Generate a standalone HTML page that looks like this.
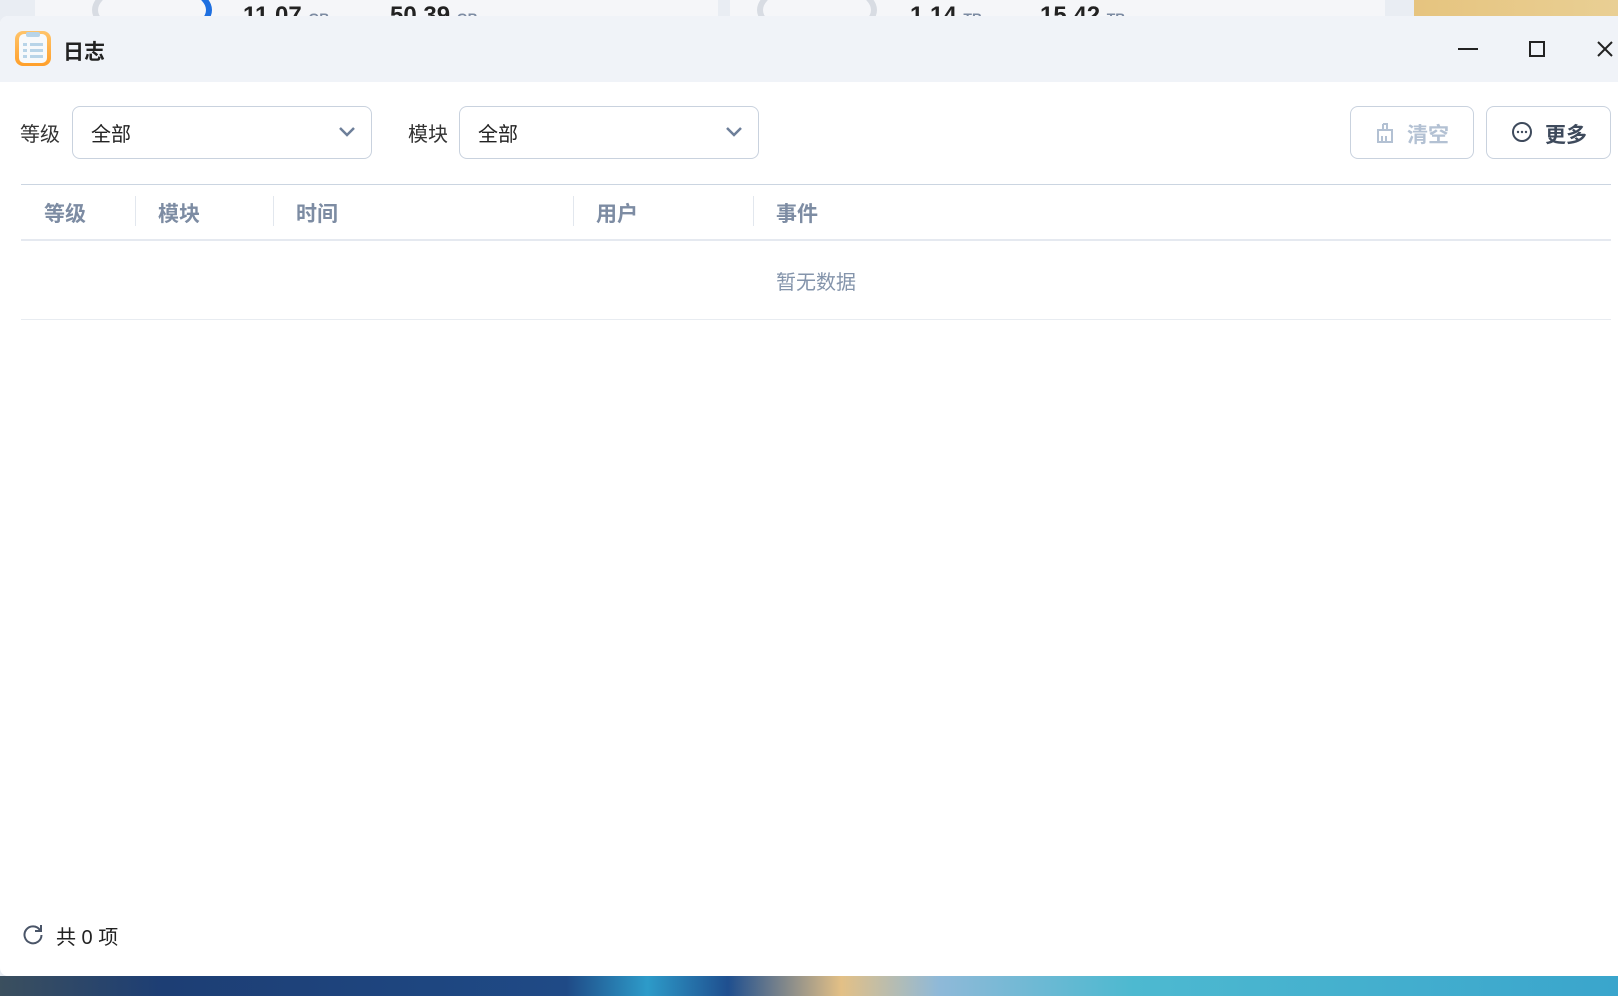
<!DOCTYPE html>
<html><head><meta charset="utf-8"><style>
*{box-sizing:border-box;margin:0;padding:0}
body{width:1618px;height:996px;overflow:hidden;position:relative;background:#e9edf3;font-family:"Liberation Sans","Noto Sans CJK SC",sans-serif}
.abs{position:absolute}
.win{position:absolute;left:0;top:16px;width:1618px;height:960px;background:#fff;border-radius:8px 0 0 8px;overflow:hidden}
.tb{position:absolute;left:0;top:0;width:100%;height:66px;background:#f0f3f8}
.sel{position:absolute;top:90px;height:53px;width:300px;border:1px solid #c9d2de;border-radius:8px;font-size:20px;color:#222;padding:17px 18px;line-height:22px}
.sel svg{position:absolute;right:14px;top:18px}
.lbl{position:absolute;top:102px;font-size:20px;color:#333}
.btn{position:absolute;top:90px;height:53px;border:1px solid #c9d2de;border-radius:8px;font-size:21px;font-weight:bold;line-height:51px}
.th{position:absolute;top:182px;font-size:21px;font-weight:bold;color:#7d8ca3}
.sep{position:absolute;top:180px;width:1px;height:30px;background:#e2e7ee}
</style></head><body>
<div class="abs" style="left:35px;top:0;width:683px;height:16px;background:#f5f6f9"></div>
<div class="abs" style="left:730px;top:0;width:655px;height:16px;background:#f5f6f9"></div>
<div class="abs" style="left:1414px;top:0;width:204px;height:16px;background:linear-gradient(90deg,#e6c47f,#e9cf94)"></div>
<div class="abs" style="left:92px;top:-20px;width:120px;height:60px;border:6px solid #d8dce3;border-right-color:#1e6fe0;border-radius:50%"></div>
<div class="abs" style="left:757px;top:-20px;width:120px;height:60px;border:6px solid #d8dce3;border-radius:50%"></div>
<div class="abs" style="left:243px;top:2px;font-size:24px;font-weight:bold;color:#222">11.07 <span style="font-size:14px;color:#7d8ca3">GB</span></div>
<div class="abs" style="left:390px;top:2px;font-size:24px;font-weight:bold;color:#222">50.39 <span style="font-size:14px;color:#7d8ca3">GB</span></div>
<div class="abs" style="left:910px;top:2px;font-size:24px;font-weight:bold;color:#222">1.14 <span style="font-size:14px;color:#7d8ca3">TB</span></div>
<div class="abs" style="left:1040px;top:2px;font-size:24px;font-weight:bold;color:#222">15.42 <span style="font-size:14px;color:#7d8ca3">TB</span></div>
<div class="abs" style="left:0;top:976px;width:1618px;height:20px;background:linear-gradient(90deg,#3b4f5e 0%,#1d3e74 10%,#1f4a86 35%,#2d9bc9 40%,#1f4f8f 45%,#e3c086 52%,#8fb9d8 58%,#4db9d0 70%,#3aa5cc 100%)"></div>
<div class="win">
 <div class="tb">
  <div class="abs" style="left:15px;top:15px;width:36px;height:35px;border-radius:8px;background:linear-gradient(#ffc46a,#ff9f2a)"></div>
  <div class="abs" style="left:19px;top:18px;width:28px;height:29px;border-radius:5px;background:#f7f9fb"></div>
  <div class="abs" style="left:26px;top:16px;width:14px;height:5px;border-radius:2px;background:#b8d4e8"></div>
  <div class="abs" style="left:23px;top:27px;width:20px;height:3px;background:linear-gradient(90deg,#b8d4e8 4px,transparent 4px,transparent 7px,#b8d4e8 7px)"></div>
  <div class="abs" style="left:23px;top:33px;width:20px;height:3px;background:linear-gradient(90deg,#b8d4e8 4px,transparent 4px,transparent 7px,#b8d4e8 7px)"></div>
  <div class="abs" style="left:23px;top:39px;width:20px;height:3px;background:linear-gradient(90deg,#b8d4e8 4px,transparent 4px,transparent 7px,#b8d4e8 7px)"></div>
  <div class="abs" style="left:63px;top:20px;font-size:21px;font-weight:bold;color:#222">日志</div>
  <div class="abs" style="left:1458px;top:32px;width:20px;height:2px;background:#222"></div>
  <div class="abs" style="left:1529px;top:25px;width:16px;height:16px;border:2px solid #222"></div>
  <svg class="abs" style="left:1596px;top:24px" width="18" height="18"><path d="M2 2L16 16M16 2L2 16" stroke="#222" stroke-width="2"/></svg>
 </div>
 <div class="lbl" style="left:20px">等级</div>
 <div class="sel" style="left:72px">全部<svg width="20" height="14"><path d="M3 3l7 7 7-7" fill="none" stroke="#6d7f99" stroke-width="2.5"/></svg></div>
 <div class="lbl" style="left:408px">模块</div>
 <div class="sel" style="left:459px">全部<svg width="20" height="14"><path d="M3 3l7 7 7-7" fill="none" stroke="#6d7f99" stroke-width="2.5"/></svg></div>
 <div class="btn" style="left:1350px;width:124px;color:#b3c1d3">
  <svg class="abs" style="left:24px;top:15px" width="20" height="22"><path d="M8 2h4v6M8 2v6M3 8h14v12H3zM7 14v6M11 14v6" fill="none" stroke="#b3c1d3" stroke-width="2"/></svg>
  <span class="abs" style="left:56px;top:3px">清空</span></div>
 <div class="btn" style="left:1486px;width:125px;color:#3e4a5c">
  <svg class="abs" style="left:24px;top:14px" width="22" height="22"><circle cx="11" cy="11" r="9" fill="none" stroke="#3e4a5c" stroke-width="2"/><circle cx="7" cy="11" r="1.2" fill="#3e4a5c"/><circle cx="11" cy="11" r="1.2" fill="#3e4a5c"/><circle cx="15" cy="11" r="1.2" fill="#3e4a5c"/></svg>
  <span class="abs" style="left:58px;top:3px">更多</span></div>
 <div class="abs" style="left:21px;top:168px;width:1590px;height:1px;background:#cbd5e1"></div>
 <div class="th" style="left:44px">等级</div>
 <div class="th" style="left:158px">模块</div>
 <div class="th" style="left:296px">时间</div>
 <div class="th" style="left:596px">用户</div>
 <div class="th" style="left:776px">事件</div>
 <div class="sep" style="left:135px"></div><div class="sep" style="left:273px"></div><div class="sep" style="left:573px"></div><div class="sep" style="left:753px"></div>
 <div class="abs" style="left:21px;top:223px;width:1590px;height:2px;background:#e5e9f0"></div>
 <div class="abs" style="left:0;top:250px;width:1632px;text-align:center;font-size:20px;color:#8494ab">暂无数据</div>
 <div class="abs" style="left:21px;top:303px;width:1590px;height:1px;background:#e8ecf1"></div>
 <svg class="abs" style="left:22px;top:907px" width="22" height="22"><path d="M18 7A8.5 8.5 0 1 0 19.5 12" fill="none" stroke="#4a5568" stroke-width="2"/><path d="M19 2v6h-6" fill="none" stroke="#4a5568" stroke-width="2"/></svg>
 <div class="abs" style="left:56px;top:905px;font-size:20px;color:#222">共 0 项</div>
</div>
</body></html>
